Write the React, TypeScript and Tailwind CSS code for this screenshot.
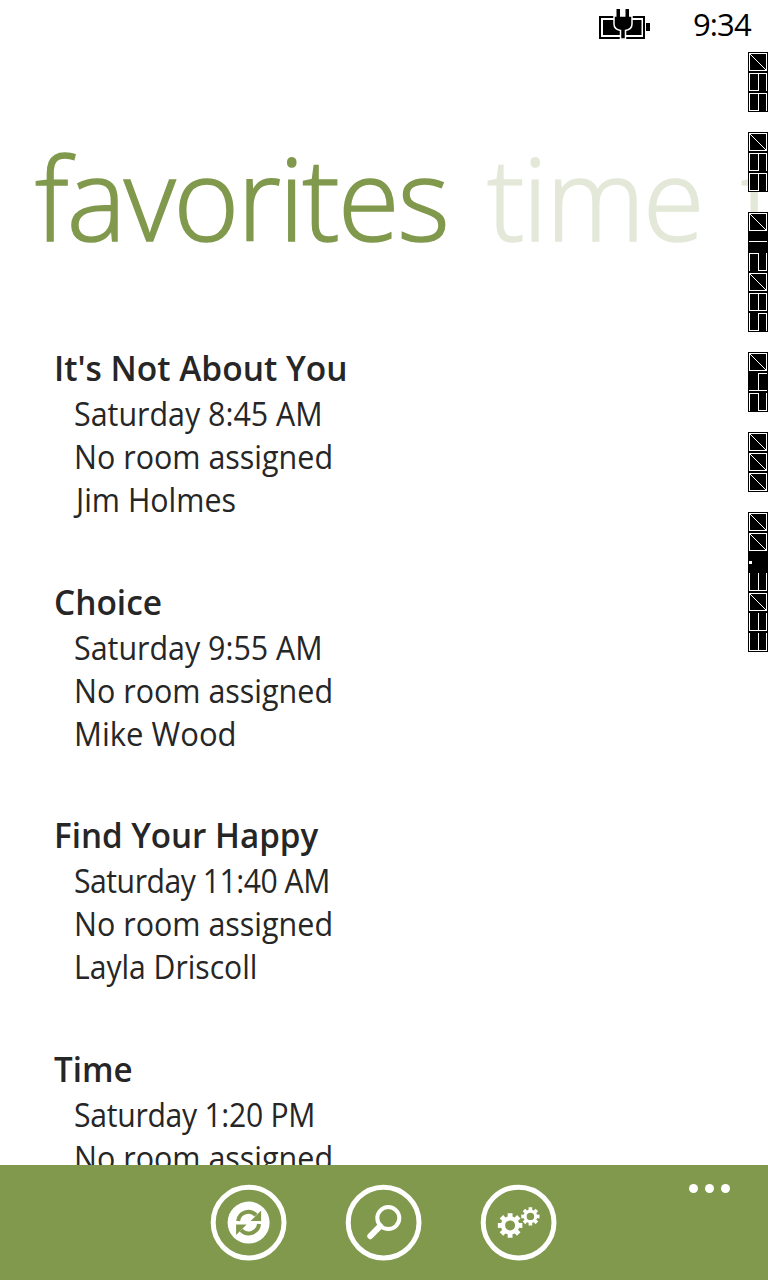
import React from "react";

const sessions = [
  { title: "It's Not About You", titleFit: "scale-x-[0.957]", time: "Saturday 8:45 AM", timeFit: "scale-x-[0.95]", speaker: "Jim Holmes", speakerFit: "ml-[2px] scale-x-[0.95]" },
  { title: "Choice", titleFit: "scale-x-[0.955]", time: "Saturday 9:55 AM", timeFit: "scale-x-[0.95]", speaker: "Mike Wood", speakerFit: "scale-x-[0.97]" },
  { title: "Find Your Happy", titleFit: "scale-x-[0.947]", time: "Saturday 11:40 AM", timeFit: "tracking-[-0.5px] scale-x-[0.942]", speaker: "Layla Driscoll", speakerFit: "scale-x-[0.94]" },
  { title: "Time", titleFit: "scale-x-[0.945]", time: "Saturday 1:20 PM", timeFit: "tracking-[-0.3px] scale-x-[0.942]", speaker: "", speakerFit: "" },
];

/* Segments of a digit lying on its side: the digit's top faces right. */
const segments: Record<string, string> = {
  "0": "M1.5 1.5H18.5V18.5H1.5ZM1.5 1.5L18.5 18.5",
  "1": "M1 9.5H19",
  "2": "M1.5 19V1.5H10.5V18.5H18.5V1",
  "3": "M1.5 1V18.5H18.5V1M10.5 1V18",
  "4": "M19 1.5H10.5V18.5M1 18.5H19",
  "5": "M1.5 1V18.5H10.5V1.5H18.5V19",
  "6": "M18.5 19V1.5H1.5V18.5H10.5V1.5",
  "8": "M1.5 1.5H18.5V18.5H1.5ZM10.5 1V19",
  ".": "M1 10.5H4M1 9.5H4M1 11.5H4",
};

const counters = ["066", "066", "012085", "042", "000", "00.3033"];

function Counter({ value }: { value: string }) {
  return (
    <div className="flex flex-col bg-black">
      {value.split("").map((digit, i) => (
        <svg key={i} width="20" height="20" fill="none" stroke="white" strokeWidth="1" shapeRendering="crispEdges">
          <path d={segments[digit]} />
        </svg>
      ))}
    </div>
  );
}

function gear(cx: number, cy: number, r: number) {
  const points: string[] = [];
  for (let i = 0; i < 8; i++) {
    const a = (i * Math.PI) / 4;
    for (const [o, k] of [[-0.26, 0.74], [-0.2, 1], [0.2, 1], [0.26, 0.74]]) {
      points.push(`${cx + r * k * Math.cos(a + o)} ${cy + r * k * Math.sin(a + o)}`);
    }
  }
  const h = r * 0.4;
  return `M${points.join("L")}ZM${cx - h} ${cy}a${h} ${h} 0 1 0 ${2 * h} 0a${h} ${h} 0 1 0 ${-2 * h} 0`;
}

function Round({ children, label }: { children: React.ReactNode; label: string }) {
  return (
    <button aria-label={label} className="size-[76px]">
      <svg viewBox="-0.6 0.4 76 76" className="size-full overflow-visible">
        <circle cx="38" cy="38" r="35.4" fill="none" stroke="white" strokeWidth="5" />
        {children}
      </svg>
    </button>
  );
}

function Line({ text, fit }: { text: string; fit: string }) {
  return (
    <p>
      <span className={`inline-block origin-left ${fit}`}>{text}</span>
    </p>
  );
}

export default function App() {
  return (
    <div className="relative flex h-[1280px] w-[768px] flex-col overflow-hidden bg-white font-['Open_Sans','Noto_Sans',sans-serif] text-[#262626]">
      <header className="flex h-[52px] shrink-0 items-start justify-end pr-4 text-black">
        <svg width="52" height="32" viewBox="0 0 52 32" className="mt-2 mr-[42px]">
          <path d="M1 9h44v21H1Z" fill="none" stroke="black" strokeWidth="2" />
          <path d="M4 12h38.500v15H4ZM47 15h4v8h-4Z" />
          <path d="M15 8h18v8q0 5.500-6.500 6.500v8.500h-5v-8.500q-6.500-1-6.500-6.500Z" fill="black" stroke="white" strokeWidth="1.500" />
          <path d="M17.500 1h3.500v8h-3.500ZM26.500 1h3.500v8h-3.500Z" />
        </svg>
        <span className="mt-1 w-[59px] text-[31px] leading-[40px] tracking-[-0.9px] whitespace-nowrap">9:34</span>
      </header>
      <nav className="flex h-[248px] shrink-0 items-start pt-[70px] pl-[35px] text-[114px] leading-[150px] font-light whitespace-nowrap text-[#80994d] [-webkit-text-stroke:1.6px_#80994d]">
        <span className="w-[452px] shrink-0 origin-left scale-x-[0.983] tracking-[-2px]">favorites</span>
        <span className="w-[254px] shrink-0 origin-left scale-x-[0.983] tracking-[-2px] text-[#e3e8d8] [-webkit-text-stroke:1.6px_#e3e8d8]">time</span>
        <span className="text-[#e3e8d8] [-webkit-text-stroke:1.6px_#e3e8d8]">t</span>
      </nav>
      <main className="flex min-h-0 grow flex-col gap-[21px] overflow-hidden pt-[46px] pl-[54px] whitespace-nowrap">
        {sessions.map((s) => (
          <section key={s.title} className="h-[212.6px] shrink-0">
            <h2 className="h-[46px] text-[35px] leading-[44px] font-semibold">
              <span className={`inline-block origin-left ${s.titleFit}`}>{s.title}</span>
            </h2>
            <div className="pl-5 text-[32px] leading-[43px]">
              <Line text={s.time} fit={s.timeFit} />
              <Line text="No room assigned" fit="scale-x-[0.952]" />
              {s.speaker && <Line text={s.speaker} fit={s.speakerFit} />}
            </div>
          </section>
        ))}
      </main>
      <footer className="relative flex h-[115px] shrink-0 gap-[59px] bg-[#80994d] pt-5 pl-[210px]">
        <Round label="Refresh">
          <circle cx="38" cy="38" r="21" fill="white" />
          <path d="M27.500 36.500a10.500 10.500 0 0 1 18-6M48.500 39.500a10.500 10.500 0 0 1-18 6" fill="none" stroke="#80994d" strokeWidth="4" />
          <path d="M50.500 26v10.500H40ZM25.500 50.500V40H36Z" fill="#80994d" />
        </Round>
        <Round label="Search">
          <circle cx="42.700" cy="33.500" r="11" fill="none" stroke="white" strokeWidth="4" />
          <path d="M34.500 41.500L24.700 51.600" stroke="white" strokeWidth="6" strokeLinecap="round" />
        </Round>
        <Round label="Settings">
          <path d={gear(29.5, 40.8, 12.5)} fill="white" fillRule="evenodd" />
          <path d={gear(49.8, 31.8, 9.3)} fill="white" fillRule="evenodd" />
        </Round>
        <div className="absolute top-[19px] right-[38px] flex gap-[7px]">
          <i className="size-[9px] rounded-full bg-white" />
          <i className="size-[9px] rounded-full bg-white" />
          <i className="size-[9px] rounded-full bg-white" />
        </div>
      </footer>
      <aside className="absolute top-[52px] right-0 flex flex-col gap-5">
        {counters.map((value, i) => <Counter key={i} value={value} />)}
      </aside>
    </div>
  );
}
